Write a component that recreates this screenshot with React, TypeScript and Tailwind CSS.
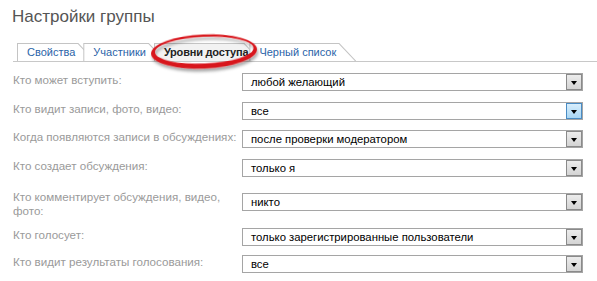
import React from 'react';

type Row = { label: string; value: string; mt: string; selectMt?: string; active?: boolean };

const rows: Row[] = [
  { label: 'Кто может вступить:', value: 'любой желающий', mt: 'mt-[11px]' },
  { label: 'Кто видит записи, фото, видео:', value: 'все', mt: 'mt-[11px]', active: true },
  { label: 'Когда появляются записи в обсуждениях:', value: 'после проверки модератором', mt: 'mt-[10px]' },
  { label: 'Кто создает обсуждения:', value: 'только я', mt: 'mt-[11px]' },
  { label: 'Кто комментирует обсуждения, видео,\nфото:', value: 'никто', mt: 'mt-[13px]', selectMt: 'mt-[3px]' },
  { label: 'Кто голосует:', value: 'только зарегистрированные пользователи', mt: 'mt-[10px]' },
  { label: 'Кто видит результаты голосования:', value: 'все', mt: 'mt-[9px]' },
];

const tabs = ['Свойства', 'Участники', 'Уровни доступа', 'Черный список'];

function Tab({ label, active, first }: { label: string; active?: boolean; first?: boolean }) {
  return (
    <div className={`relative h-[18px] ${first ? '' : '-ml-[12px]'}`}>
      <div className="absolute inset-0 bg-[#c4c4c4] [clip-path:polygon(0_0,calc(100%_-_17px)_0,100%_100%,0_100%)]" />
      <div
        className={`absolute left-px top-px right-0 bottom-0 ${
          active ? 'bg-[#f2f2f2]' : 'bg-white'
        } [clip-path:polygon(0_0,calc(100%_-_17.5px)_0,calc(100%_-_1.4px)_100%,0_100%)]`}
      />
      <span
        className={`relative block whitespace-nowrap pl-[10px] text-[11px] leading-[18px] ${
          active ? 'pr-[13px] font-bold tracking-[-0.2px] text-[#222]' : 'pr-[20px] text-[#2b64a8]'
        }`}
      >
        {label}
      </span>
    </div>
  );
}

function Select({ value, active }: { value: string; active?: boolean }) {
  return (
    <div className="relative h-[18px] w-[341px] shrink-0 border border-[#a5a5a5] bg-white">
      <span className="block pl-[8px] pt-[1px] text-[11.3px] leading-[15px] text-black">{value}</span>
      <div
        className={`absolute right-0 top-0 flex h-[16px] w-[16px] items-center justify-center border ${
          active
            ? 'border-[#4a8cc4] bg-gradient-to-b from-[#d8eefc] to-[#a9d6f3]'
            : 'border-[#8a8a8a] bg-gradient-to-b from-[#ececec] to-[#d4d4d4]'
        }`}
      >
        <span className="mt-[2px] h-0 w-0 border-x-[3.5px] border-t-[4px] border-x-transparent border-t-black" />
      </div>
    </div>
  );
}

export default function App() {
  return (
    <div className="relative h-[281px] w-[597px] overflow-hidden bg-white font-['Liberation_Sans',Arial,sans-serif]">
      <div className="pl-[12px] pt-[7px] text-[17px] leading-[20px] text-[#555]">Настройки группы</div>

      <div className="ml-[13px] mt-[16px] flex border-b border-[#c8c8c8] pl-[4px]">
        {tabs.map((t, i) => (
          <Tab key={t} label={t} first={i === 0} active={i === 2} />
        ))}
      </div>

      <div className="flex flex-col pl-[13px]">
        {rows.map((r) => (
          <div key={r.label} className={`flex items-start ${r.mt}`}>
            <div className="w-[229px] shrink-0 whitespace-pre text-[11.6px] leading-[14px] text-[#9a9a9a]">{r.label}</div>
            <div className={r.selectMt ?? ''}>
              <Select value={r.value} active={r.active} />
            </div>
          </div>
        ))}
      </div>

      {/* red marker ellipse around the active tab */}
      <svg className="pointer-events-none absolute left-0 top-0" width="597" height="281" viewBox="0 0 597 281">
        <defs>
          <filter id="sh" x="-20%" y="-50%" width="140%" height="200%">
            <feDropShadow dx="1" dy="3" stdDeviation="1.6" floodColor="#000" floodOpacity="0.35" />
          </filter>
        </defs>
        <g transform="rotate(-2.5 204 51.5)" filter="url(#sh)">
          <path
            fillRule="evenodd"
            fill="#d8161c"
            d="M151,51.5 a53,17 0 1,0 106,0 a53,17 0 1,0 -106,0 Z M155,50.2 a49.3,13.4 0 1,0 98.6,0 a49.3,13.4 0 1,0 -98.6,0 Z"
          />
        </g>
      </svg>
    </div>
  );
}
